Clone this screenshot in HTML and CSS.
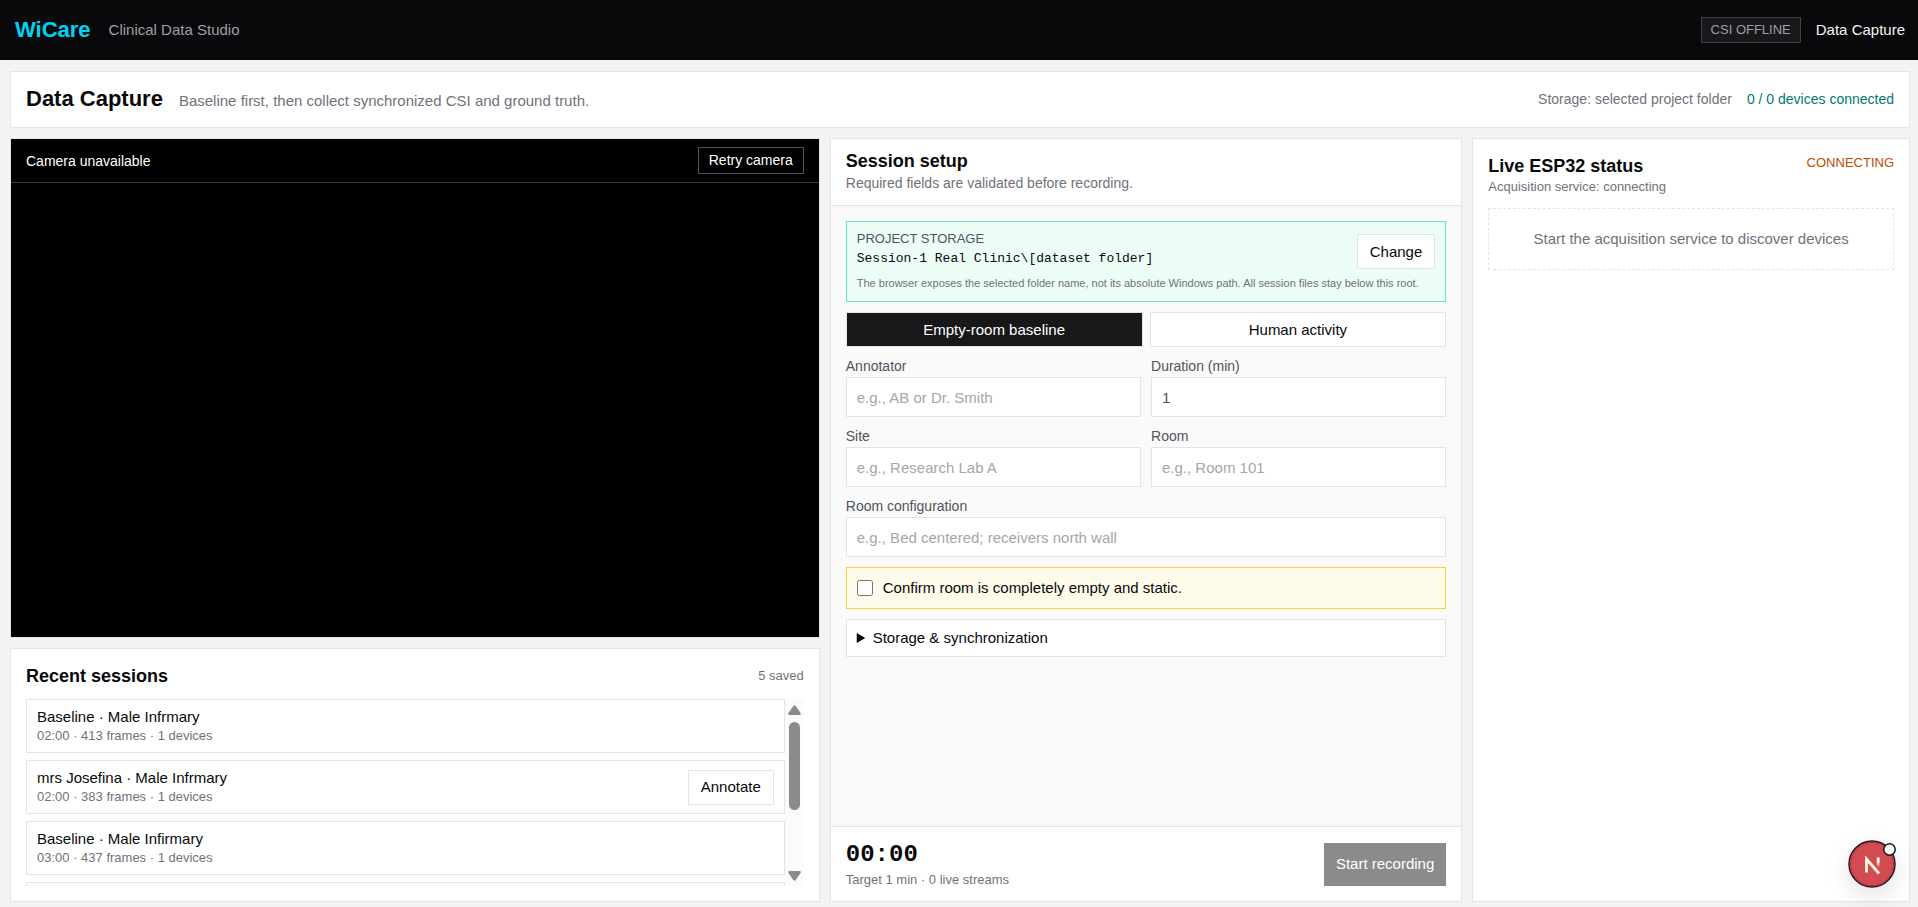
FILE: index.html
```
<!DOCTYPE html>
<html lang="en">
<head>
    <meta charset="utf-8">
    <title>WiCare - Data Capture</title>
    <link rel="stylesheet" href="styles.css">
</head>
<body>

<header class="topbar">
    <span class="brand">WiCare</span>
    <span class="tagline">Clinical Data Studio</span>
    <span class="csi-badge">CSI OFFLINE</span>
    <a class="nav-link" href="#">Data Capture</a>
</header>

<main class="page">
    <section class="panel title-bar">
        <h1>Data Capture</h1>
        <p class="subtitle">Baseline first, then collect synchronized CSI and ground truth.</p>
        <span class="storage-info">Storage: selected project folder</span>
        <span class="device-count">0 / 0 devices connected</span>
    </section>

    <div class="columns">
        <div class="left-column">
            <section class="panel camera">
                <div class="camera-head">
                    <span>Camera unavailable</span>
                    <button type="button" class="retry">Retry camera</button>
                </div>
            </section>

            <section class="panel sessions">
                <div class="sessions-head">
                    <h2>Recent sessions</h2>
                    <span class="small">5 saved</span>
                </div>
                <div class="sessions-body">
                    <ul class="session-list">
                        <li>
                            <div>
                                <p>Baseline · Male Infrmary</p>
                                <p class="small">02:00 · 413 frames · 1 devices</p>
                            </div>
                        </li>
                        <li>
                            <div>
                                <p>mrs Josefina · Male Infrmary</p>
                                <p class="small">02:00 · 383 frames · 1 devices</p>
                            </div>
                            <button type="button" class="btn">Annotate</button>
                        </li>
                        <li>
                            <div>
                                <p>Baseline · Male Infirmary</p>
                                <p class="small">03:00 · 437 frames · 1 devices</p>
                            </div>
                        </li>
                        <li></li>
                    </ul>
                    <div class="scrollbar" aria-hidden="true">
                        <svg width="13" height="10" viewBox="0 0 13 10"><path d="M5.3 1Q6.5-.6 7.7 1L12.6 8Q13.2 10 11.5 10H1.5Q-.2 10 .4 8Z"/></svg>
                        <span class="thumb"></span>
                        <svg width="13" height="10" viewBox="0 0 13 10"><path d="M5.3 9Q6.5 10.6 7.7 9L12.6 2Q13.2 0 11.5 0H1.5Q-.2 0 .4 2Z"/></svg>
                    </div>
                </div>
            </section>
        </div>

        <section class="panel setup">
            <div class="setup-head">
                <h2>Session setup</h2>
                <p class="note">Required fields are validated before recording.</p>
            </div>

            <form class="setup-form">
                <div class="storage-box">
                    <div class="storage-row">
                        <div>
                            <p class="storage-label">PROJECT STORAGE</p>
                            <p class="storage-path">Session-1 Real Clinic\[dataset folder]</p>
                        </div>
                        <button type="button" class="btn">Change</button>
                    </div>
                    <p class="storage-hint">The browser exposes the selected folder name, not its absolute Windows path. All session files stay below this root.</p>
                </div>

                <div class="modes">
                    <button type="button" class="mode active">Empty-room baseline</button>
                    <button type="button" class="mode">Human activity</button>
                </div>

                <div class="fields">
                    <div class="field">
                        <label for="annotator">Annotator</label>
                        <input type="text" id="annotator" placeholder="e.g., AB or Dr. Smith">
                    </div>
                    <div class="field">
                        <label for="duration">Duration (min)</label>
                        <input type="text" inputmode="numeric" id="duration" value="1">
                    </div>
                    <div class="field">
                        <label for="site">Site</label>
                        <input type="text" id="site" placeholder="e.g., Research Lab A">
                    </div>
                    <div class="field">
                        <label for="room">Room</label>
                        <input type="text" id="room" placeholder="e.g., Room 101">
                    </div>
                    <div class="field wide">
                        <label for="config">Room configuration</label>
                        <input type="text" id="config" placeholder="e.g., Bed centered; receivers north wall">
                    </div>
                </div>

                <label class="confirm" for="empty">
                    <input type="checkbox" id="empty">
                    Confirm room is completely empty and static.
                </label>

                <details class="sync">
                    <summary>Storage &amp; synchronization</summary>
                </details>
            </form>

            <div class="setup-foot">
                <div>
                    <p class="timer">00:00</p>
                    <p class="small">Target 1 min · 0 live streams</p>
                </div>
                <button type="button" class="record" disabled>Start recording</button>
            </div>
        </section>

        <section class="panel status">
            <div class="status-head">
                <div>
                    <h2>Live ESP32 status</h2>
                    <p class="small">Acquisition service: connecting</p>
                </div>
                <span class="connecting">CONNECTING</span>
            </div>
            <p class="empty-state">Start the acquisition service to discover devices</p>
        </section>
    </div>
</main>

<button type="button" class="dev-badge" aria-label="Open dev tools">
    <svg width="48" height="48" viewBox="0 0 48 48">
        <defs>
            <linearGradient id="fade" x1="0" y1="0" x2="0" y2="1">
                <stop offset="0.4" stop-color="#fff"/>
                <stop offset="1" stop-color="#fff" stop-opacity="0"/>
            </linearGradient>
        </defs>
        <circle cx="24" cy="24" r="23" fill="#d24b50" stroke="#2b1a22" stroke-width="1.5"/>
        <circle cx="24" cy="24" r="21.5" fill="none" stroke="#b23a3c" stroke-width="1"/>
        <path d="M18.5 32.5V19L31 33.5" fill="none" stroke="#fff5e6" stroke-width="2.8"/>
        <rect x="28.8" y="17.5" width="2.8" height="10" fill="url(#fade)"/>
        <circle cx="41.5" cy="9.5" r="5.7" fill="#fff" stroke="#14141c" stroke-width="1.5"/>
    </svg>
</button>

</body>
</html>
```
FILE: styles.css
```
* {
    box-sizing: border-box;
}
body {
    margin: 0;
    height: 100vh;
    display: flex;
    flex-direction: column;
    background-color: #f3f3f3;
    color: #09090b;
    font-family: "Liberation Sans", Arial, sans-serif;
    font-size: 15px;
    line-height: 20px;
}
h1, h2, p, ul {
    margin: 0;
    padding: 0;
}
h1 {
    font-size: 22px;
    line-height: 28px;
}
h2 {
    font-size: 18px;
    line-height: 24px;
}
button, input {
    font: inherit;
    color: inherit;
    border-radius: 0;
}
.small {
    font-size: 13px;
    line-height: 18px;
    color: #71717b;
}

/* top bar */
.topbar {
    display: flex;
    align-items: center;
    height: 60px;
    flex-shrink: 0;
    padding: 0 13px 0 15px;
    background-color: #09090b;
}
.brand {
    font-size: 22px;
    font-weight: bold;
    color: #00d3f2;
}
.tagline {
    margin-left: 18px;
    margin-right: auto;
    color: #9f9fa9;
}
.csi-badge {
    padding: 2px 9px;
    border: 1px solid #3f3f46;
    background-color: #18181b;
    color: #9f9fa9;
    font-size: 13px;
}
.nav-link {
    margin-left: 15px;
    color: #f4f4f5;
    text-decoration: none;
}

/* layout */
.page {
    flex: 1;
    min-height: 0;
    display: flex;
    flex-direction: column;
    gap: 10px;
    padding: 11px 8px 5px 10px;
}
.panel {
    border: 1px solid #e4e4e4;
    background-color: #fff;
}
.title-bar {
    display: flex;
    align-items: center;
    padding: 13px 15px 14px;
}
.subtitle {
    margin-left: 16px;
    margin-right: auto;
    padding-top: 4px;
    color: #71717b;
}
.storage-info, .device-count {
    font-size: 14px;
    color: #71717b;
}
.device-count {
    margin-left: 15px;
    color: #00786f;
}
.columns {
    flex: 1;
    min-height: 0;
    display: grid;
    grid-template-columns: 1.85fr 1.445fr 1fr;
    gap: 10px;
}
.left-column {
    display: flex;
    flex-direction: column;
    gap: 10px;
    min-height: 0;
}

/* camera */
.camera {
    flex: 1;
    background-color: #000;
}
.camera-head {
    display: flex;
    justify-content: space-between;
    align-items: center;
    padding: 8px 15px;
    border-bottom: 1px solid #3a3a3c;
    color: #fff;
    font-size: 14px;
}
.retry {
    padding: 2px 10px 3px;
    border: 1px solid #52525c;
    background-color: #000;
    line-height: 20px;
}

/* recent sessions */
.sessions {
    padding: 15px;
}
.sessions-head {
    display: flex;
    justify-content: space-between;
    align-items: center;
    margin-bottom: 11px;
}
.sessions-body {
    display: flex;
    height: 187px;
    overflow: hidden;
}
.session-list {
    flex: 1;
    list-style: none;
}
.session-list li {
    display: flex;
    justify-content: space-between;
    align-items: center;
    height: 54px;
    margin-bottom: 7px;
    padding: 0 10px;
    border: 1px solid #e4e4e4;
}
.btn {
    height: 35px;
    padding: 0 12px;
    border: 1px solid #e4e4e4;
    background-color: #fff;
}
.scrollbar {
    display: flex;
    flex-direction: column;
    align-items: center;
    width: 19px;
    padding: 6px 0 5px;
    background-color: #fbfbfb;
}
.scrollbar svg {
    fill: #8a8b8a;
}
.thumb {
    width: 11px;
    height: 88px;
    margin-top: 7px;
    margin-bottom: auto;
    border-radius: 6px;
    background-color: #8a8b8a;
}

/* session setup */
.setup {
    display: flex;
    flex-direction: column;
}
.setup-head {
    padding: 10px 15px 12px;
    border-bottom: 1px solid #e4e4e4;
}
.note {
    font-size: 14px;
    color: #71717b;
}
.setup-form {
    flex: 1;
    display: flex;
    flex-direction: column;
    gap: 10px;
    padding: 15px;
    background-color: #fafafa;
}
.storage-box {
    padding: 7px 10px 9px;
    border: 1px solid #5ee9b5;
    background-color: #ecfdf5;
}
.storage-row {
    display: flex;
    justify-content: space-between;
    align-items: flex-end;
}
.storage-label {
    font-size: 13px;
    color: #52525c;
}
.storage-path {
    font-family: "Liberation Mono", "Courier New", monospace;
    font-size: 13px;
}
.storage-hint {
    margin-top: 5px;
    font-size: 11px;
    line-height: 18px;
    color: #71717b;
}
.modes {
    display: grid;
    grid-template-columns: 1fr 1fr;
    gap: 7px;
}
.mode {
    height: 35px;
    border: 1px solid #e4e4e4;
    background-color: #fff;
}
.mode.active {
    background-color: #18181b;
    color: #fff;
}
.fields {
    display: grid;
    grid-template-columns: 1fr 1fr;
    gap: 10px;
}
.wide {
    grid-column: 1 / 3;
}
.field label {
    display: block;
    margin-bottom: 2px;
    font-size: 14px;
    line-height: 18px;
    color: #52525c;
}
.field input {
    display: block;
    width: 100%;
    height: 40px;
    padding: 0 10px;
    border: 1px solid #e4e4e4;
    background-color: #fff;
    color: #52525c;
}
.field input::placeholder {
    color: #a6a6a8;
}
.confirm {
    display: flex;
    align-items: center;
    gap: 10px;
    padding: 10px;
    border: 1px solid #ffd230;
    background-color: #fffbeb;
}
.confirm input {
    width: 16px;
    height: 16px;
    margin: 0;
}
.sync {
    padding: 8px 10px;
    border: 1px solid #e4e4e4;
    background-color: #fff;
}
.setup-foot {
    display: flex;
    justify-content: space-between;
    align-items: center;
    padding: 12px 15px;
    border-top: 1px solid #e4e4e4;
}
.timer {
    font-family: "Liberation Mono", "Courier New", monospace;
    font-size: 24px;
    font-weight: bold;
    line-height: 32px;
}
.record {
    height: 43px;
    padding: 0 12px;
    border: none;
    background-color: #8a8b8a;
    color: #fff;
}

/* device status */
.status {
    padding: 15px;
}
.status-head {
    display: flex;
    justify-content: space-between;
}
.connecting {
    font-size: 13px;
    line-height: 18px;
    color: #bb4d00;
}
.empty-state {
    margin-top: 12px;
    padding: 20px;
    border: 1px dashed #e4e4e4;
    color: #71717b;
    text-align: center;
}

.dev-badge {
    position: fixed;
    right: 22px;
    bottom: 19px;
    width: 48px;
    height: 48px;
    padding: 0;
    border: none;
    border-radius: 50%;
    background: none;
    box-shadow: 0 8px 24px rgba(0, 0, 0, 0.12);
}
.dev-badge svg {
    display: block;
    overflow: visible;
}
```
